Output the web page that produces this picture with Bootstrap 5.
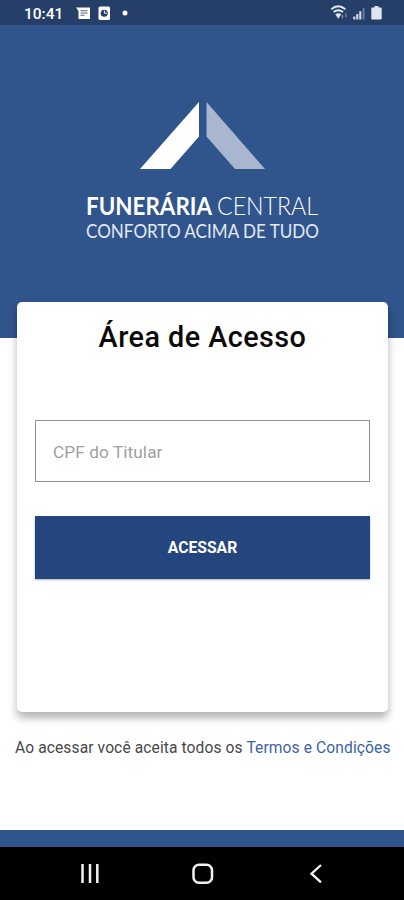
<!DOCTYPE html>
<html lang="pt-BR">
<head>
<meta charset="utf-8">
<meta name="viewport" content="width=device-width, initial-scale=1">
<title>Funerária Central</title>
<link href="https://cdn.jsdelivr.net/npm/bootstrap@5.3.0/dist/css/bootstrap.min.css" rel="stylesheet">
<style>
body{font-family:Roboto,"Liberation Sans",sans-serif;background:#fff;height:900px;overflow:hidden}
svg{display:block}
.status-bar{height:25px;background:#263f69;color:#fff;flex:none}
.clock{font-size:15.5px;font-weight:500;line-height:28px;width:52px;margin-left:24px}
.hero{height:313px;background:#30548c;flex:none}
.login-card{height:410px;width:371px;margin:-36px 0 0 17px;border:0;border-radius:5px;padding:0 18px;box-shadow:0 6px 9px rgba(0,0,0,.3);flex:none}
.title{font-size:28.8px;font-weight:500;letter-spacing:.45px;line-height:34px;margin:18px 0 66px;color:#0b0b0b;white-space:nowrap}
.cpf{height:62px;border:1px solid #909090;padding:2px 17px 0;font-size:17.2px;letter-spacing:.1px}
.cpf::placeholder{color:#a0a0a0;opacity:1}
.enter{height:63px;margin-top:34px;background:#24467e;color:#fff;font-size:15.7px;font-weight:700;box-shadow:0 1px 2px rgba(0,0,0,.3)}
.terms{font-size:15.6px;letter-spacing:.1px;line-height:20px;margin:26px 0 0 15px;color:#484848;white-space:nowrap}
.terms a{color:#3c62a8}
.strip{height:17px;background:#30548c;flex:none}
.nav-keys{height:53px;background:#000;flex:none}
</style>
<script src="https://cdn.jsdelivr.net/npm/bootstrap@5.3.0/dist/js/bootstrap.bundle.min.js"></script>
</head>
<body class="d-flex flex-column">
<header class="status-bar d-flex">
  <div class="clock">10:41</div>
  <svg width="328" height="25" viewBox="76 0 328 25">
    <path d="M76 7.500h14v11.500h-11.500v-8z" fill="#fff"/>
    <path d="M80.500 10.700h7M80.500 13h7M80.500 15.300h4" stroke="#53688d" stroke-width="1.100"/>
    <rect x="98.500" y="6.500" width="11.500" height="13.500" rx="1.500" fill="#fff"/>
    <circle cx="104.200" cy="13.200" r="3.500" fill="#263f69"/>
    <path d="M104.400 10.700v2.500h2.500" stroke="#fff" fill="none"/>
    <circle cx="125" cy="13" r="2.500" fill="#fff"/>
    <path d="M331.300 9.200q7-5.800 14 0M333.600 12q4.800-3.600 9.400 0" fill="none" stroke="#e2e7f0" stroke-width="2"/>
    <path d="M335.300 14.300q3-2.300 6 0l-3 4.400z" fill="#e2e7f0"/>
    <path d="M342.500 15v3.500M346 13.500v3.500" stroke="#8292ad" stroke-width="1.300"/>
    <path d="M354.300 16.500v3M357.300 14v5.500M360.300 11.200v8.300" stroke="#d5dbe6" stroke-width="2.100"/>
    <path d="M363.600 8v11.500" stroke="#667a9b" stroke-width="2"/>
    <path d="M374.500 6h4v1.500h2.200q1 0 1 1v10q0 1-1 1h-8.400q-1 0-1-1v-10q0-1 1-1h2.200z" fill="#dfe4ee"/>
  </svg>
</header>
<section class="hero">
  <svg width="404" height="313" viewBox="0 25 404 313" font-family="Lato,'Open Sans',sans-serif" fill="#fff">
    <path d="M199 102v34.500L170.500 169H140z"/>
    <path d="M206.500 102L265 169H235l-28.500-32.500z" fill="#a9b6d0"/>
    <text x="86" y="214.500" font-size="25.500" font-weight="700" textLength="126" lengthAdjust="spacingAndGlyphs">FUNERÁRIA</text>
    <text x="217" y="214.500" font-size="25.500" font-weight="300" textLength="101" lengthAdjust="spacingAndGlyphs">CENTRAL</text>
    <text x="86" y="237.700" font-size="18.500" font-weight="400" textLength="233" lengthAdjust="spacingAndGlyphs" fill="#e4e9f3">CONFORTO ACIMA DE TUDO</text>
  </svg>
</section>
<main class="card login-card">
  <h1 class="title text-center">Área de Acesso</h1>
  <input class="form-control rounded-0 cpf" type="text" placeholder="CPF do Titular" aria-label="CPF do Titular">
  <button class="btn rounded-0 border-0 w-100 enter" type="button">ACESSAR</button>
</main>
<p class="terms">Ao acessar você aceita todos os <a href="#" class="text-decoration-none">Termos e Condições</a></p>
<div class="strip mt-auto"></div>
<footer class="nav-keys">
  <svg width="404" height="53" viewBox="0 847 404 53" fill="none" stroke="#f2f2f2">
    <path d="M82.500 864v19M90 864v19M97.300 864v19" stroke-width="2.500"/>
    <rect x="193.500" y="864.700" width="18.500" height="18" rx="5.500" stroke-width="2.500"/>
    <path d="M321 865l-9.500 8.700 9.500 8.700" stroke-width="2.300"/>
  </svg>
</footer>
</body>
</html>
